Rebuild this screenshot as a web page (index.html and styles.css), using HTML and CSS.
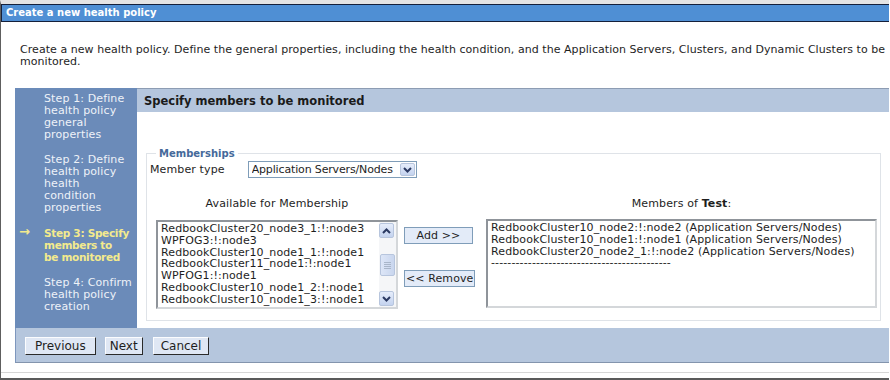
FILE: index.html
```html
<!DOCTYPE html>
<html>
<head>
<meta charset="utf-8">
<link rel="stylesheet" href="styles.css">
</head>
<body>
<div class="frame">
  <div class="titlebar">Create a new health policy</div>
  <p class="intro">Create a new health policy. Define the general properties, including the health condition, and the Application Servers, Clusters, and Dynamic Clusters to be monitored.</p>
  <div class="wizard">
    <div class="wizard-main">
      <div class="steps">
        <div class="step">Step 1: Define health policy general properties</div>
        <div class="step">Step 2: Define health policy health condition properties</div>
        <div class="step current"><span class="arrow">&#x2192;</span>Step 3: Specify members to<br>be monitored</div>
        <div class="step">Step 4: Confirm health policy creation</div>
      </div>
      <div class="content">
        <div class="heading">Specify members to be monitored</div>
        <fieldset class="members">
          <legend>Memberships</legend>
          <div class="type-row">
            <span class="type-label">Member type</span>
            <div class="select">
              <span class="select-value">Application Servers/Nodes</span>
              <span class="select-btn"><svg width="9" height="6" viewBox="0 0 9 6"><path d="M1 1 L4.5 4.5 L8 1" fill="none" stroke="#2b3a63" stroke-width="2"/></svg></span>
            </div>
          </div>
          <div class="lists">
            <div class="col">
              <div class="col-label">Available for Membership</div>
              <div class="listbox avail">
                <div class="items">
                  <div>RedbookCluster20_node3_1:!:node3</div>
                  <div>WPFOG3:!:node3</div>
                  <div>RedbookCluster10_node1_1:!:node1</div>
                  <div>RedbookCluster11_node1:!:node1</div>
                  <div>WPFOG1:!:node1</div>
                  <div>RedbookCluster10_node1_2:!:node1</div>
                  <div>RedbookCluster10_node1_3:!:node1</div>
                </div>
                <div class="scrollbar">
                  <span class="sb-btn"><svg width="9" height="6" viewBox="0 0 9 6"><path d="M1 5 L4.5 1.5 L8 5" fill="none" stroke="#2b3a63" stroke-width="2"/></svg></span>
                  <span class="sb-track"><span class="sb-thumb"><svg width="7" height="8" viewBox="0 0 7 8"><path d="M0 1.5H7M0 3.5H7M0 5.5H7M0 7.5H7" stroke="#a9b6c9" stroke-width="1"/></svg></span></span>
                  <span class="sb-btn"><svg width="9" height="6" viewBox="0 0 9 6"><path d="M1 1 L4.5 4.5 L8 1" fill="none" stroke="#2b3a63" stroke-width="2"/></svg></span>
                </div>
              </div>
            </div>
            <div class="movers">
              <button class="mover">Add &gt;&gt;</button>
              <button class="mover">&lt;&lt; Remove</button>
            </div>
            <div class="col">
              <div class="col-label">Members of <b>Test</b>:</div>
              <div class="listbox chosen">
                <div class="items">
                  <div>RedbookCluster10_node2:!:node2 (Application Servers/Nodes)</div>
                  <div>RedbookCluster10_node1:!:node1 (Application Servers/Nodes)</div>
                  <div>RedbookCluster20_node2_1:!:node2 (Application Servers/Nodes)</div>
                  <div>--------------------------------------------</div>
                </div>
              </div>
            </div>
          </div>
        </fieldset>
      </div>
    </div>
    <div class="buttonbar">
      <button class="btn btn-prev">Previous</button>
      <button class="btn btn-next">Next</button>
      <button class="btn btn-cancel">Cancel</button>
    </div>
  </div>
</div>
</body>
</html>
```
FILE: styles.css
```css
html, body {
  margin: 0;
  padding: 0;
  background: #ffffff;
}
body {
  font-family: "DejaVu Sans", Verdana, sans-serif;
  font-size: 11px;
  letter-spacing: 0.12px;
  color: #1e1e1e;
}
.frame {
  width: 889px;
  height: 380px;
  box-sizing: border-box;
  border-top: 4px solid #e4e4e4;
  border-left: 1px solid #5e5e5e;
  border-bottom: 2px solid #5a5a5a;
  background: #ffffff;
  overflow: hidden;
  box-shadow: inset 0 -5px 0 #ffffff, inset 0 -6px 0 #d6d6d6;
}
.titlebar {
  height: 16px;
  line-height: 16px;
  background: #4f8fd4;
  border: 1px solid #15203a;
  border-right: none;
  color: #ffffff;
  font-weight: bold;
  font-size: 10px;
  letter-spacing: 0;
  padding-left: 4px;
}
.intro {
  margin: 22px 0 0 19px;
  width: 868px;
  line-height: 12px;
  font-size: 11px;
  letter-spacing: 0.05px;
}
.wizard {
  margin: 20px 0 0 14px;
  width: 874px;
}
.wizard-main {
  display: flex;
  height: 240px;
}
.steps {
  width: 122px;
  flex: none;
  background: #6b8bb9;
  padding: 5px 5px 0 29px;
  box-sizing: border-box;
  color: #eef2f8;
  line-height: 12px;
}
.step {
  margin-bottom: 13px;
  position: relative;
}
.step.current {
  color: #f3ea8d;
  font-weight: bold;
  font-size: 10.5px;
  letter-spacing: -0.3px;
  margin-bottom: 14px;
}
.arrow {
  position: absolute;
  left: -25px;
  top: -1px;
  font-size: 13px;
  font-weight: bold;
}
.content {
  flex: 1;
}
.heading {
  height: 24px;
  line-height: 25px;
  background: #b5c6dd;
  border-top: 1px solid #8d9cb3;
  box-sizing: border-box;
  padding-left: 7px;
  font-weight: bold;
  font-size: 11.5px;
  letter-spacing: 0;
  color: #1a1a1a;
}
.members {
  margin: 36px 8px 0 9px;
  padding: 0 0 11px 3px;
  border: 1px solid #dfe3e8;
}
.members legend {
  color: #45699a;
  font-weight: bold;
  font-size: 10px;
  letter-spacing: 0;
  padding: 0 3px;
  margin-left: 6px;
}
.type-row {
  display: flex;
  align-items: center;
  gap: 23px;
  margin-top: 2px;
}
.select {
  display: flex;
  align-items: center;
  width: 169px;
  height: 17px;
  box-sizing: border-box;
  border: 1px solid #7f9db9;
  padding: 0 1px 0 3px;
  background: #fff;
}
.select-value {
  flex: 1;
  white-space: nowrap;
  overflow: hidden;
  letter-spacing: -0.15px;
}
.select-btn, .sb-btn {
  width: 15px;
  height: 13px;
  flex: none;
  box-sizing: border-box;
  border: 1px solid #b7c5dd;
  border-radius: 2px;
  background: linear-gradient(#e6edfb, #c4d3ef);
  display: flex;
  align-items: center;
  justify-content: center;
}
.lists {
  display: flex;
  margin-top: 19px;
  margin-left: 6px;
}
.col {
  display: flex;
  flex-direction: column;
}
.col-label {
  text-align: center;
  height: 22px;
  line-height: 14px;
}
.listbox {
  border: 2px solid #c3c7cc;
  border-color: #8f949a #d4d7da #d4d7da #8f949a;
  display: flex;
  background: #fff;
  box-sizing: border-box;
}
.avail {
  width: 242px;
  height: 89px;
  margin-top: 1px;
}
.chosen {
  width: 391px;
  height: 89px;
}
.items {
  flex: 1;
  padding: 1px 3px;
  line-height: 11.8px;
  white-space: nowrap;
  overflow: hidden;
}
.scrollbar {
  width: 17px;
  display: flex;
  flex-direction: column;
  padding: 1px 1px 1px 0;
  box-sizing: border-box;
  background: #f5f6f8;
}
.sb-btn {
  height: 15px;
}
.sb-track {
  flex: 1;
  display: flex;
  align-items: center;
  justify-content: center;
}
.sb-thumb {
  width: 15px;
  height: 22px;
  box-sizing: border-box;
  border: 1px solid #b7c5dd;
  border-radius: 2px;
  background: linear-gradient(90deg, #dde6f7, #c9d6ee);
  display: flex;
  align-items: center;
  justify-content: center;
}
.movers {
  width: 88px;
  flex: none;
  display: flex;
  flex-direction: column;
  gap: 26px;
  padding: 30px 0 0 6px;
  box-sizing: border-box;
  align-items: flex-start;
}
.mover {
  font-family: "DejaVu Sans", Verdana, sans-serif;
  font-size: 11px;
  letter-spacing: 0.1px;
  height: 17px;
  padding: 0 1px;
  min-width: 69px;
  background: #e3ebf8;
  border: 1px solid #7f9db9;
  color: #1e1e1e;
}
.buttonbar {
  height: 35px;
  background: #b5c6dd;
  border-left: 1px solid #7d96bd;
  border-bottom: 1px solid #8394ad;
  box-sizing: border-box;
  display: flex;
  align-items: center;
  gap: 9px;
  padding: 1px 0 0 9px;
}
.btn {
  font-family: "DejaVu Sans", Verdana, sans-serif;
  font-size: 12px;
  height: 18px;
  padding: 0 9px;
  background: #dfe7f4;
  border: 1px solid #fbfcfe;
  border-right-color: #2a2a2a;
  border-bottom-color: #2a2a2a;
  color: #1e1e1e;
}
.btn-next {
  padding: 0 4px;
}
.btn-cancel {
  padding: 0 7px;
  margin-left: 1px;
}
```
